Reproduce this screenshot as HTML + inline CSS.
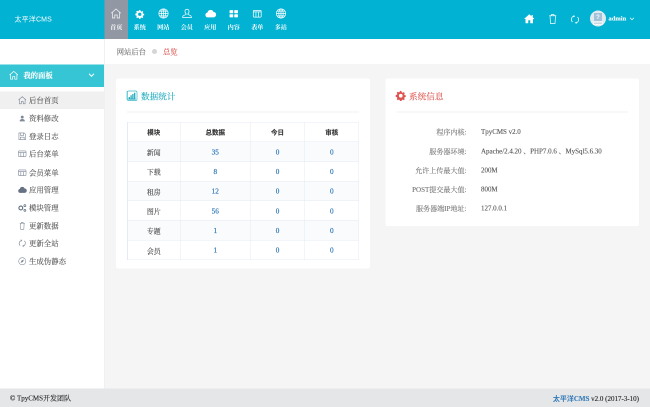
<!DOCTYPE html>
<html lang="zh-CN">
<head>
<meta charset="utf-8">
<title>TpyCMS</title>
<style>
*{box-sizing:border-box;margin:0;padding:0}
html,body{width:650px;height:407px;overflow:hidden;background:#f5f5f5}
body{font-family:"Liberation Serif","Noto Serif CJK SC",serif;color:#555;-webkit-text-stroke:0.22px currentColor}
#wrap{position:absolute;left:0;top:0;width:1300px;height:814px;transform:scale(.5);transform-origin:0 0;will-change:transform;overflow:hidden}
.abs{position:absolute}
/* header */
#hd{position:absolute;left:0;top:0;width:1300px;height:78px;background:#01b2d3}
#logo{position:absolute;left:29px;top:28px;font-family:"Liberation Sans","Noto Sans CJK SC",sans-serif;font-size:14px;color:#fff;line-height:20px;white-space:nowrap;-webkit-text-stroke:0;letter-spacing:0.3px}
.nav{position:absolute;top:0;height:78px;width:47px;text-align:center;color:#fff}
.nav.on{background:#9198a3}
.nav>svg{position:absolute;left:11.5px;top:15px;width:24px;height:24px}
.nav>span{position:absolute;left:0;width:47px;top:45.5px;font-size:12.3px;line-height:18px;font-weight:bold;white-space:nowrap;-webkit-text-stroke:0}
.tool{position:absolute}
/* sidebar */
#side{position:absolute;left:0;top:78px;width:208px;height:699px;background:#fff}
#sideline{position:absolute;left:208px;top:78px;width:2px;height:699px;background:#eef1f4}
#sh{position:absolute;left:0;top:51px;width:208px;height:45px;background:#36c5d4;color:#fff}
#sh>span{position:absolute;left:47px;top:11px;font-size:14.6px;line-height:22px;font-weight:bold;white-space:nowrap}
.mi{position:absolute;left:0;width:208px;height:35px;color:#555}
.mi.on{background:#f0f0f0}
.mi>span{position:absolute;left:58px;top:7px;font-size:14.8px;line-height:22px;white-space:nowrap}
.mi>svg{position:absolute;left:35px;top:8px;width:19px;height:19px}
/* breadcrumb */
#bc{position:absolute;left:210px;top:78px;width:1090px;height:50px;background:#fff}
#bc>span{position:absolute;top:14.8px;font-size:14.6px;line-height:22px;white-space:nowrap}
/* panels */
.panel{position:absolute;background:#fff;border-radius:4px}
.pt{position:absolute;left:50px;top:23.8px;font-size:17.3px;line-height:26px;white-space:nowrap}
.pl{position:absolute;left:22px;right:22px;top:66px;height:2px;background:#f0f2f4}
table{position:absolute;left:22px;top:87px;border-collapse:collapse;font-size:13.8px;color:#444}
td,th{border:1.3px solid #e5ebf3;height:39.3px;text-align:center;vertical-align:middle;padding:0}
td{padding-top:1.5px}
th{font-family:"Liberation Sans","Noto Sans CJK SC",sans-serif;font-weight:bold;color:#333;font-size:13px;padding-bottom:2px}
tr.s td{background:#f9fbfd}
td.n{color:#337ab7;font-size:14.4px;padding-top:1.5px;-webkit-text-stroke:0.4px #337ab7}
.il{position:absolute;right:345px;font-size:14.1px;line-height:20px;color:#777;white-space:nowrap}
.iv{position:absolute;left:191px;font-size:13.9px;line-height:20px;color:#555;white-space:nowrap}
/* footer */
#ft{position:absolute;left:0;top:777px;width:1300px;height:37px;background:#e4e6e8;font-size:14px;color:#222}
#ft .l{position:absolute;left:20px;top:10px;line-height:20px;white-space:nowrap}
#ft .r{position:absolute;right:22px;top:10px;line-height:20px;white-space:nowrap}
#ft b{color:#337ab7}
.hs{font-family:"Liberation Sans","Noto Sans CJK SC",sans-serif;-webkit-text-stroke:0}
</style>
</head>
<body>
<div id="wrap">
 <div id="hd">
  <div id="logo">太平洋CMS</div>
  <div class="nav on" style="left:209px"><svg style="left:10.5px" viewBox="0 0 20 20" fill="none" stroke="#fff" stroke-width="1.15" opacity=".92"><path d="M2 9.5 L10 2.5 L18 9.5 M4 8 V17.5 H8 V12.5 H12 V17.5 H16 V8"/></svg><span>首页</span></div>
  <div class="nav" style="left:256px"><svg style="left:13px;top:18px;width:21px;height:21px" viewBox="0 0 20 20"><path fill="#fff" d="M10 2l1.2.2.5 2 1.5.7 1.8-1 1.7 1.7-1 1.8.7 1.5 2 .5v2.4l-2 .5-.7 1.5 1 1.8-1.7 1.7-1.8-1-1.5.7-.5 2H8.800l-.5-2-1.500-.700-1.800 1-1.700-1.700 1-1.800-.700-1.500-2-.500V8.800l2-.5.7-1.500-1-1.800 1.700-1.700 1.800 1 1.500-.700.500-2z M10 6.800a3.200 3.200 0 100 6.400 3.200 3.200 0 000-6.400z" fill-rule="evenodd"/></svg><span>系统</span></div>
  <div class="nav" style="left:303px"><svg viewBox="0 0 20 20" fill="none" stroke="#fff" stroke-width="1.2"><circle cx="10" cy="10" r="7.8"/><ellipse cx="10" cy="10" rx="3.6" ry="7.8"/><path d="M2.200 10H17.800M3.500 6H16.500M3.500 14H16.500M10 2.200V17.800"/></svg><span>网站</span></div>
  <div class="nav" style="left:350px"><svg style="left:12.5px;top:16px;width:22px;height:22px" viewBox="0 0 20 20" fill="none" stroke="#fff" stroke-width="1.3"><path d="M10 2.200c2.300 0 3.700 1.700 3.700 4 0 2-1 3.600-2.200 4.300v1.200l4.800 2c1 .4 1.500 1.200 1.500 2.300v1.500H2.200V16c0-1.100.5-1.900 1.500-2.300l4.800-2v-1.200C7.300 9.800 6.300 8.200 6.300 6.200c0-2.300 1.400-4 3.700-4z"/></svg><span>会员</span></div>
  <div class="nav" style="left:397px"><svg viewBox="0 0 20 20"><path fill="#fff" d="M5.500 16.500a4 4 0 01-.6-7.950 5.200 5.200 0 0110-1.200 4.600 4.600 0 01.6 9.150z"/></svg><span>应用</span></div>
  <div class="nav" style="left:444px"><svg style="left:13px;top:17px;width:21px;height:21px" viewBox="0 0 20 20" fill="#fff"><rect x="2" y="3" width="7" height="6" rx="1.2"/><rect x="11" y="3" width="7" height="6" rx="1.2"/><rect x="2" y="11" width="7" height="6" rx="1.2"/><rect x="11" y="11" width="7" height="6" rx="1.2"/></svg><span>内容</span></div>
  <div class="nav" style="left:491px"><svg style="left:13px;top:17px;width:21px;height:21px" viewBox="0 0 20 20" fill="none" stroke="#fff" stroke-width="1.4"><rect x="2.500" y="3.500" width="15" height="13" rx="1.500"/><path d="M2.500 6.500H17.500M7.500 6.500V16.500M12.500 6.500V16.500"/></svg><span>表单</span></div>
  <div class="nav" style="left:538px"><svg viewBox="0 0 20 20" fill="none" stroke="#fff" stroke-width="1.2"><circle cx="10" cy="10" r="7.8"/><ellipse cx="10" cy="10" rx="3.6" ry="7.8"/><path d="M2.200 10H17.800M3.500 6H16.500M3.500 14H16.500M10 2.200V17.800"/></svg><span>多站</span></div>

  <svg class="tool" style="left:1047px;top:27px;width:23px;height:21px" viewBox="0 0 23 21"><path fill="#fff" d="M11.500 1.500L1 11h3v8.500h5.500v-6h4v6H19V11h3L18.500 7.800V3h-2.500v2.500z"/></svg>
  <svg class="tool" style="left:1097px;top:27px;width:17px;height:22px" viewBox="0 0 17 22" fill="none" stroke="#fff" stroke-width="1.400"><path d="M1.500 4.500h14M6 4.500V2h5v2.500M3 4.500l1 15.500h9l1-15.500"/></svg>
  <svg class="tool" style="left:1141px;top:28.5px;width:18px;height:20px" viewBox="0 0 20 22" fill="none" stroke="#fff" stroke-width="1.700"><path d="M4.500 16.500A7.500 7.500 0 018 3.500M15.500 5.500A7.500 7.500 0 0112 18.500"/><path d="M6.500 1.800l2.500 1.700-2 2M13.500 20.200l-2.500-1.700 2-2" stroke-width="1.400"/></svg>
  <div class="abs" style="left:1180px;top:21px;width:32px;height:32px;border-radius:16px;background:#dfeaf1;overflow:hidden"><div class="abs" style="left:8px;top:5px;width:16px;height:16px;background:#a3c2d8;color:#eef5fa;font-family:'Liberation Sans',sans-serif;font-size:12px;font-weight:bold;line-height:16px;text-align:center">?</div><div class="abs" style="left:6px;top:22px;width:20px;height:7px;background:#f3f7fa"></div><div class="abs" style="left:8px;top:24px;width:16px;height:3px;background:#b9cad6;opacity:.7"></div></div>
  <div class="abs" style="left:1217px;top:27px;font-size:13px;line-height:20px;font-weight:bold;color:#fff">admin</div>
  <svg class="tool" style="left:1259px;top:34px;width:10px;height:8px" viewBox="0 0 10 8" fill="none" stroke="#fff" stroke-width="1.400"><path d="M1 1.500l4 4 4-4"/></svg>
 </div>

 <div id="side">
  <div id="sh"><svg class="abs" style="left:17px;top:11px;width:21px;height:21px" viewBox="0 0 20 20" fill="none" stroke="#fff" stroke-width="1.400"><path d="M2 9.500 L10 2.500 L18 9.500 M4 8 V17.500 H8 V12.500 H12 V17.500 H16 V8"/></svg><span>我的面板</span><svg class="abs" style="left:177px;top:17px;width:12px;height:9px" viewBox="0 0 12 9" fill="none" stroke="#fff" stroke-width="2"><path d="M1 1.500l5 5 5-5"/></svg></div>
  <div class="mi on" style="top:105px"><svg viewBox="0 0 20 20" fill="none" stroke="#808a99" stroke-width="1.250"><path d="M2 9.500 L10 2.500 L18 9.500 M4 8 V17.500 H8 V12.500 H12 V17.500 H16 V8"/></svg><span>后台首页</span></div>
  <div class="mi" style="top:141px"><svg viewBox="0 0 20 20" fill="#808a99"><circle cx="10" cy="7.500" r="3"/><path d="M4.500 16.500c0-3.500 2.500-5 5.500-5s5.500 1.500 5.500 5z"/></svg><span>资料修改</span></div>
  <div class="mi" style="top:177px"><svg viewBox="0 0 20 20" fill="none" stroke="#808a99" stroke-width="1.250"><path d="M3 3h11l3 3v11H3z M6 3v5h7V3 M6 17v-5h8v5"/></svg><span>登录日志</span></div>
  <div class="mi" style="top:212px"><svg viewBox="0 0 20 20" fill="none" stroke="#808a99" stroke-width="1.250"><rect x="2" y="4" width="16" height="12" rx="1.500"/><path d="M2 7.500H18M7 7.500V16M13 7.500V16"/></svg><span>后台菜单</span></div>
  <div class="mi" style="top:249.5px"><svg viewBox="0 0 20 20" fill="none" stroke="#808a99" stroke-width="1.250"><rect x="2" y="4" width="16" height="12" rx="1.500"/><path d="M2 7.500H18M7 7.500V16M13 7.500V16"/></svg><span>会员菜单</span></div>
  <div class="mi" style="top:284px"><svg viewBox="0 0 20 20"><path fill="#667183" d="M5.500 16.500a4 4 0 01-.6-7.950 5.200 5.200 0 0110-1.200 4.600 4.600 0 01.6 9.150z"/></svg><span>应用管理</span></div>
  <div class="mi" style="top:320px"><svg viewBox="0 0 20 20" fill="none" stroke="#667183"><circle cx="7" cy="10.500" r="4" stroke-width="2.400"/><circle cx="15.500" cy="5.500" r="2" stroke-width="1.600"/><circle cx="15.500" cy="15.500" r="2" stroke-width="1.600"/></svg><span>模块管理</span></div>
  <div class="mi" style="top:356px"><svg viewBox="0 0 20 20" fill="none" stroke="#808a99" stroke-width="1.200"><path d="M4.500 5h11M8 5V3h4v2M6 5l.700 12.500h6.600l.700-12.500"/></svg><span>更新数据</span></div>
  <div class="mi" style="top:391px"><svg viewBox="0 0 20 20" fill="none" stroke="#808a99" stroke-width="1.250"><path d="M5.500 15A6.500 6.500 0 018.500 4M14.500 5A6.500 6.500 0 0111.500 16"/><path d="M7 2.300l2.200 1.700-1.800 2M13 17.700l-2.200-1.700 1.800-2" stroke-width="1.100"/></svg><span>更新全站</span></div>
  <div class="mi" style="top:427px"><svg viewBox="0 0 20 20" fill="none" stroke="#808a99" stroke-width="1.200"><circle cx="10" cy="10" r="7.500"/><path d="M13.500 6.500l-2 5-5 2 2-5z" fill="#808a99" stroke="none"/></svg><span>生成伪静态</span></div>
 </div>
 <div id="sideline"></div>

 <div id="bc"><span style="left:23.5px;color:#707070">网站后台</span><div class="abs" style="left:94px;top:20px;width:10px;height:10px;border-radius:5px;background:#d5d5d5"></div><span style="left:116px;color:#d9534f">总览</span></div>

 <div class="panel" style="left:232px;top:157px;width:508px;height:380px">
  <svg class="abs" style="left:21px;top:23.5px;width:22px;height:21px" viewBox="0 0 22 21" fill="none" stroke="#1aa9bd"><rect x="1" y="1" width="20" height="19" rx="2.500" stroke-width="1.400" stroke="#3fb9ca"/><path d="M3.500 17.200H18.500" stroke-width="2"/><path d="M5.600 17v-4M9.200 17V9.500M12.800 17V7M16.400 17V4.500" stroke-width="2.500"/></svg>
  <div class="pt" style="color:#1aa9bd">数据统计</div>
  <div class="pl"></div>
  <table>
   <tr><th style="width:106px">模块</th><th style="width:140px">总数据</th><th style="width:109px">今日</th><th style="width:108px">审核</th></tr>
   <tr class="s"><td>新闻</td><td class="n">35</td><td class="n">0</td><td class="n">0</td></tr>
   <tr><td>下载</td><td class="n">8</td><td class="n">0</td><td class="n">0</td></tr>
   <tr class="s"><td>租房</td><td class="n">12</td><td class="n">0</td><td class="n">0</td></tr>
   <tr><td>图片</td><td class="n">56</td><td class="n">0</td><td class="n">0</td></tr>
   <tr class="s"><td>专题</td><td class="n">1</td><td class="n">0</td><td class="n">0</td></tr>
   <tr><td>会员</td><td class="n">1</td><td class="n">0</td><td class="n">0</td></tr>
  </table>
 </div>

 <div class="panel" style="left:771px;top:157px;width:507px;height:294.500px">
  <svg class="abs" style="left:19.5px;top:23.5px;width:21px;height:21px" viewBox="0 0 20 20"><path fill="#dd5550" d="M10 1l1.400.2.600 2.300 1.700.8 2-1.200 2 2-1.200 2 .8 1.700 2.300.6v2.800l-2.300.6-.8 1.700 1.200 2-2 2-2-1.200-1.700.8-.6 2.300H8.600l-.6-2.300-1.700-.800-2 1.200-2-2 1.200-2-.800-1.700-2.300-.600V8.600l2.300-.6.8-1.700-1.200-2 2-2 2 1.200 1.700-.800.600-2.300z M10 6.500a3.500 3.500 0 100 7 3.500 3.500 0 000-7z" fill-rule="evenodd"/></svg>
  <div class="pt" style="left:47px;color:#dd5550">系统信息</div>
  <div class="pl"></div>
  <div class="il" style="top:96.5px">程序内核:</div><div class="iv" style="top:96.5px">TpyCMS v2.0</div>
  <div class="il" style="top:135.5px">服务器环境:</div><div class="iv" style="top:135.5px">Apache/2.4.20 、PHP7.0.6 、MySql5.6.30</div>
  <div class="il" style="top:173.5px">允许上传最大值:</div><div class="iv" style="top:173.5px">200M</div>
  <div class="il" style="top:211.5px">POST提交最大值:</div><div class="iv" style="top:211.5px">800M</div>
  <div class="il" style="top:249.5px">服务器端IP地址:</div><div class="iv" style="top:249.5px">127.0.0.1</div>
 </div>

 <div id="ft"><div class="l">© TpyCMS开发团队</div><div class="r"><b><span class="hs">太平洋</span>CMS</b> v2.0 (2017-3-10)</div></div>
</div>
</body>
</html>
